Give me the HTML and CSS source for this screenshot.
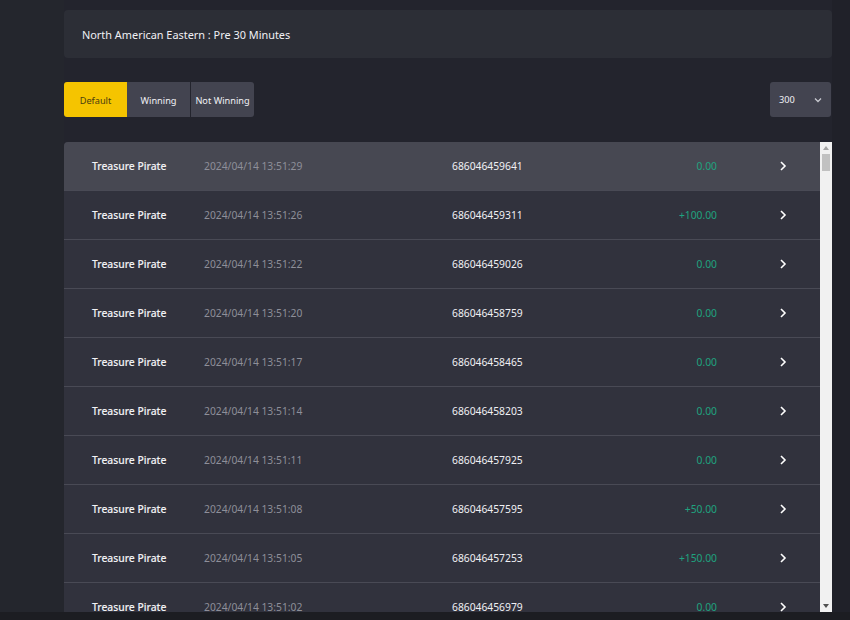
FILE: index.html
```html
<!DOCTYPE html>
<html>
<head>
<meta charset="utf-8">
<link rel="stylesheet" href="styles.css">
</head>
<body>
<div class="page">
  <div class="gutter"></div>
  <main class="content">
    <div class="panel">North American Eastern : Pre 30 Minutes</div>
    <div class="toolbar">
      <div class="tabs">
        <button class="tab active">Default</button>
        <button class="tab">Winning</button>
        <button class="tab">Not Winning</button>
      </div>
      <div class="select">
        <span>300</span>
        <svg width="8" height="6" viewBox="0 0 8 6"><path d="M1 1.5 L4 4.5 L7 1.5" fill="none" stroke="#c8c9d0" stroke-width="1.3"/></svg>
      </div>
    </div>
    <div class="listwrap">
      <div class="list">
        <div class="row hover"><span class="name">Treasure Pirate</span><span class="date">2024/04/14 13:51:29</span><span class="id">686046459641</span><span class="amt">0.00</span><span class="go"><svg width="8" height="12" viewBox="0 0 8 12"><path d="M2 2 L6 6 L2 10" fill="none" stroke="#fff" stroke-width="1.6"/></svg></span></div>
        <div class="row"><span class="name">Treasure Pirate</span><span class="date">2024/04/14 13:51:26</span><span class="id">686046459311</span><span class="amt">+100.00</span><span class="go"><svg width="8" height="12" viewBox="0 0 8 12"><path d="M2 2 L6 6 L2 10" fill="none" stroke="#fff" stroke-width="1.6"/></svg></span></div>
        <div class="row"><span class="name">Treasure Pirate</span><span class="date">2024/04/14 13:51:22</span><span class="id">686046459026</span><span class="amt">0.00</span><span class="go"><svg width="8" height="12" viewBox="0 0 8 12"><path d="M2 2 L6 6 L2 10" fill="none" stroke="#fff" stroke-width="1.6"/></svg></span></div>
        <div class="row"><span class="name">Treasure Pirate</span><span class="date">2024/04/14 13:51:20</span><span class="id">686046458759</span><span class="amt">0.00</span><span class="go"><svg width="8" height="12" viewBox="0 0 8 12"><path d="M2 2 L6 6 L2 10" fill="none" stroke="#fff" stroke-width="1.6"/></svg></span></div>
        <div class="row"><span class="name">Treasure Pirate</span><span class="date">2024/04/14 13:51:17</span><span class="id">686046458465</span><span class="amt">0.00</span><span class="go"><svg width="8" height="12" viewBox="0 0 8 12"><path d="M2 2 L6 6 L2 10" fill="none" stroke="#fff" stroke-width="1.6"/></svg></span></div>
        <div class="row"><span class="name">Treasure Pirate</span><span class="date">2024/04/14 13:51:14</span><span class="id">686046458203</span><span class="amt">0.00</span><span class="go"><svg width="8" height="12" viewBox="0 0 8 12"><path d="M2 2 L6 6 L2 10" fill="none" stroke="#fff" stroke-width="1.6"/></svg></span></div>
        <div class="row"><span class="name">Treasure Pirate</span><span class="date">2024/04/14 13:51:11</span><span class="id">686046457925</span><span class="amt">0.00</span><span class="go"><svg width="8" height="12" viewBox="0 0 8 12"><path d="M2 2 L6 6 L2 10" fill="none" stroke="#fff" stroke-width="1.6"/></svg></span></div>
        <div class="row"><span class="name">Treasure Pirate</span><span class="date">2024/04/14 13:51:08</span><span class="id">686046457595</span><span class="amt">+50.00</span><span class="go"><svg width="8" height="12" viewBox="0 0 8 12"><path d="M2 2 L6 6 L2 10" fill="none" stroke="#fff" stroke-width="1.6"/></svg></span></div>
        <div class="row"><span class="name">Treasure Pirate</span><span class="date">2024/04/14 13:51:05</span><span class="id">686046457253</span><span class="amt">+150.00</span><span class="go"><svg width="8" height="12" viewBox="0 0 8 12"><path d="M2 2 L6 6 L2 10" fill="none" stroke="#fff" stroke-width="1.6"/></svg></span></div>
        <div class="row"><span class="name">Treasure Pirate</span><span class="date">2024/04/14 13:51:02</span><span class="id">686046456979</span><span class="amt">0.00</span><span class="go"><svg width="8" height="12" viewBox="0 0 8 12"><path d="M2 2 L6 6 L2 10" fill="none" stroke="#fff" stroke-width="1.6"/></svg></span></div>
      </div>
      <div class="scrollbar">
        <div class="sb-btn"><svg width="6" height="4" viewBox="0 0 6 4"><path d="M0 4 L3 0 L6 4 Z" fill="#a3a3a3"/></svg></div>
        <div class="sb-thumb"></div>
        <div class="sb-track"></div>
        <div class="sb-btn"><svg width="6" height="4" viewBox="0 0 6 4"><path d="M0 0 L3 4 L6 0 Z" fill="#505050"/></svg></div>
      </div>
    </div>
  </main>
  <div class="gutter-right"></div>
</div>
<div class="bottombar"></div>
</body>
</html>
```

FILE: styles.css
```css
* { box-sizing: border-box; }
html, body {
  margin: 0;
  padding: 0;
  width: 850px;
  height: 620px;
  overflow: hidden;
  background: #23242c;
  font-family: "Noto Sans", "Open Sans", sans-serif;
  color: #e8e9ee;
}
.page {
  display: flex;
  height: 612px;
  overflow: hidden;
}
.gutter {
  width: 64px;
  flex: none;
  background: #24262d;
}
.gutter-right {
  width: 18px;
  flex: none;
  background: #202129;
}
.content {
  width: 768px;
  flex: none;
  padding-top: 10px;
  display: flex;
  flex-direction: column;
  background: #23242d;
}
.panel {
  height: 48px;
  background: #2c2e36;
  border-radius: 4px;
  padding-left: 18px;
  display: flex;
  align-items: center;
  font-size: 10.9px;
  color: #f0f0f4;
}
.toolbar {
  margin-top: 24px;
  display: flex;
  justify-content: space-between;
  height: 35px;
}
.tabs {
  display: flex;
}
.tab {
  width: 63px;
  height: 35px;
  border: none;
  background: #434450;
  color: #f0f0f4;
  font-family: "Noto Sans", "Open Sans", sans-serif;
  font-size: 9.2px;
  padding: 2px 0 0;
  margin-right: 1px;
}
.tab:first-child { border-radius: 3px 0 0 3px; margin-right: 0; }
.tab:last-child { border-radius: 0 3px 3px 0; margin-right: 0; }
.tab.active {
  background: #f5c400;
  color: #4a3d10;
}
.select {
  width: 61px;
  margin-right: 1px;
  height: 35px;
  background: #434450;
  border-radius: 3px;
  display: flex;
  align-items: center;
  justify-content: space-between;
  padding: 0 9px 0 9px;
  font-size: 9.2px;
  color: #f0f0f4;
}
.listwrap {
  margin-top: 25px;
  display: flex;
  height: 470px;
}
.list {
  flex: 1;
  overflow: hidden;
  background: #31323d;
  border-radius: 4px 0 0 0;
}
.row {
  height: 49px;
  border-bottom: 1px solid #494a55;
  display: flex;
  align-items: center;
  padding-bottom: 1px;
  font-size: 10.3px;
  background: #31323d;
}
.row.hover { background: #474852; }
.name {
  width: 140px;
  padding-left: 28px;
  color: #f2f2f5;
  font-weight: 500;
  flex: none;
  -webkit-text-stroke: 0.1px #f2f2f5;
}
.date {
  width: 248px;
  color: #8e8f99;
  flex: none;
}
.id {
  width: 170px;
  color: #f0f0f4;
  flex: none;
}
.amt {
  width: 95px;
  text-align: right;
  color: #1fa37f;
  flex: none;
}
.go {
  width: 70px;
  display: flex;
  justify-content: flex-end;
  flex: none;
}
.scrollbar {
  width: 12px;
  flex: none;
  background: #f1f1f1;
  display: flex;
  flex-direction: column;
  align-items: center;
}
.sb-btn {
  height: 12px;
  width: 12px;
  display: flex;
  align-items: center;
  justify-content: center;
}
.sb-thumb {
  width: 8px;
  height: 17px;
  background: #c1c1c1;
}
.sb-track { flex: 1; }
.bottombar {
  height: 8px;
  background: #1c1d22;
}
```
